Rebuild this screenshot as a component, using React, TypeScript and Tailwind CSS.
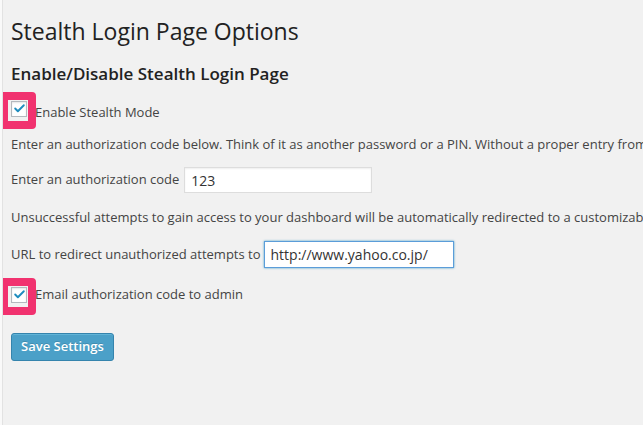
import { Check } from 'lucide-react';

const font = { fontFamily: '"Open Sans", "Liberation Sans", sans-serif' };

function MarkedCheckbox({ label, labelOffset = '' }: { label: string; labelOffset?: string }) {
  return (
    <div className="flex items-center h-[37px]">
      <div className="relative w-4 h-4">
        {/* pink annotation frame */}
        <div className="absolute left-[-11px] top-[-9px] w-[36px] h-[37px] rounded-[4px] border-[8px] border-[#f1326f]" />
        <div className="relative w-4 h-4 bg-white border border-[#b4b9be] shadow-[inset_0_1px_2px_rgba(0,0,0,0.1)] flex items-center justify-center">
          <Check className="w-[13px] h-[13px] text-[#1e8cbe]" strokeWidth={3.5} />
        </div>
      </div>
      <span className={`ml-2 text-[13px] text-[#444] ${labelOffset}`}>{label}</span>
    </div>
  );
}

export default function App() {
  return (
    <div className="flex w-[643px] h-[425px] overflow-hidden bg-[#f1f1f1]" style={font}>
      <div className="w-[3px] shrink-0 bg-[#f9f9f9] border-r border-[#e2e2e2]" />
      <div className="flex-1 pl-2 pt-[16px] whitespace-nowrap overflow-hidden text-[#444]">
        <h1 className="text-[23px] leading-[30px] text-[#222]">Stealth Login Page Options</h1>
        <h2 className="mt-[17px] text-[17px] leading-[22px] font-semibold text-[#222]">
          Enable/Disable Stealth Login Page
        </h2>

        <div className="mt-[5px]">
          <MarkedCheckbox label="Enable Stealth Mode" labelOffset="mt-[8px]" />
        </div>

        <p className="mt-[7px] text-[13px] leading-5">
          Enter an authorization code below. Think of it as another password or a PIN. Without a proper entry from the code, you won&apos;t be able to log in.
        </p>

        <div className="mt-[13px] flex items-center text-[13px]">
          <span>Enter an authorization code</span>
          <input
            readOnly
            value="123"
            className="ml-[5px] w-[188px] h-[26px] px-[6px] bg-white border border-[#ddd] shadow-[inset_0_1px_2px_rgba(0,0,0,0.07)] text-[14px] text-[#333] outline-none"
          />
        </div>

        <p className="mt-[14px] text-[13px] leading-5">
          Unsuccessful attempts to gain access to your dashboard will be automatically redirected to a customizable URL.
        </p>

        <div className="mt-[14px] flex items-center text-[13px]">
          <span>URL to redirect unauthorized attempts to</span>
          <input
            readOnly
            value="http://www.yahoo.co.jp/"
            className="ml-[3px] w-[190px] h-[27px] px-[6px] bg-white border border-[#5b9dd9] shadow-[0_0_2px_rgba(30,140,190,0.8)] text-[14px] text-[#333] outline-none"
          />
        </div>

        <div className="mt-[8px]">
          <MarkedCheckbox label="Email authorization code to admin" />
        </div>

        <button className="mt-[20px] h-[28px] px-[9px] rounded-[3px] bg-[#4ba0c8] border border-[#3584ad] shadow-[inset_0_1px_0_rgba(120,200,230,0.5)] text-[13px] font-semibold text-white [text-shadow:0_-1px_0_rgba(0,0,0,0.15)]">
          Save Settings
        </button>
      </div>
    </div>
  );
}
